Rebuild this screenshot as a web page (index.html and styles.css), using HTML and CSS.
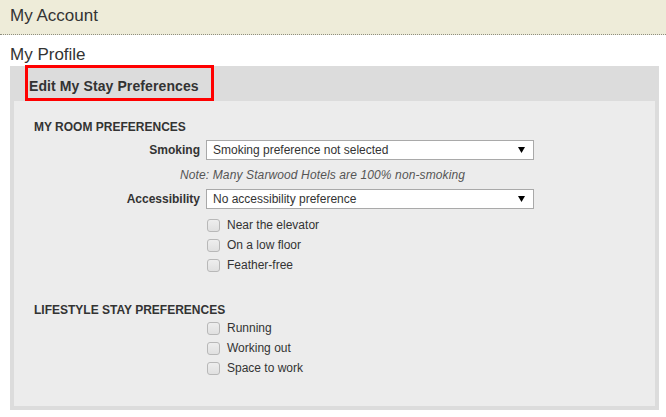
FILE: index.html
```html
<!DOCTYPE html>
<html lang="en">
<head>
<meta charset="utf-8">
<title>My Account</title>
<link rel="stylesheet" href="styles.css">
</head>
<body>
<header class="top-bar">
  <h1 class="top-title">My Account</h1>
</header>
<h2 class="page-title">My Profile</h2>
<section class="panel">
  <div class="panel-tab">
    <h3 class="tab-title">Edit My Stay Preferences</h3>
    <span class="highlight"></span>
  </div>
  <div class="panel-body">
    <h4 class="section-title">MY ROOM PREFERENCES</h4>
    <div class="field-row">
      <label class="field-label">Smoking</label>
      <div class="select">
        <span class="select-text">Smoking preference not selected</span>
        <svg class="select-arrow" width="7" height="6" viewBox="0 0 7 6"><polygon points="0,0 7,0 3.5,6" fill="#000"/></svg>
      </div>
    </div>
    <p class="note">Note: Many Starwood Hotels are 100% non-smoking</p>
    <div class="field-row field-row-second">
      <label class="field-label">Accessibility</label>
      <div class="select">
        <span class="select-text">No accessibility preference</span>
        <svg class="select-arrow" width="7" height="6" viewBox="0 0 7 6"><polygon points="0,0 7,0 3.5,6" fill="#000"/></svg>
      </div>
    </div>
    <ul class="check-list">
      <li class="check-item"><span class="checkbox"></span><span>Near the elevator</span></li>
      <li class="check-item"><span class="checkbox"></span><span>On a low floor</span></li>
      <li class="check-item"><span class="checkbox"></span><span>Feather-free</span></li>
    </ul>
    <h4 class="section-title section-title-lifestyle">LIFESTYLE STAY PREFERENCES</h4>
    <ul class="check-list check-list-lifestyle">
      <li class="check-item"><span class="checkbox"></span><span>Running</span></li>
      <li class="check-item"><span class="checkbox"></span><span>Working out</span></li>
      <li class="check-item"><span class="checkbox"></span><span>Space to work</span></li>
    </ul>
  </div>
</section>
</body>
</html>
```
FILE: styles.css
```css
* {
  box-sizing: border-box;
}

body {
  margin: 0;
  font-family: "Liberation Sans", Arial, sans-serif;
  color: #333;
  background: #fff;
}

.top-bar {
  height: 35px;
  background: #eeecd9;
  border-bottom: 1px dotted #8f8f80;
  padding: 6px 10px 0;
}

.top-title {
  margin: 0;
  font-size: 17px;
  font-weight: normal;
  line-height: 20px;
  color: #333;
}

.page-title {
  margin: 10px 10px 0;
  font-size: 17px;
  font-weight: normal;
  line-height: 20px;
  height: 21px;
  color: #333;
}

.panel {
  margin: 0 7px 0 10px;
  background: #dcdcdc;
  padding: 0 4px 4px;
}

.panel-tab {
  position: relative;
  height: 35px;
  padding: 12px 0 0 15px;
}

.tab-title {
  margin: 0;
  font-size: 14px;
  font-weight: bold;
  line-height: 16px;
  letter-spacing: 0.1px;
  color: #333;
}

.highlight {
  position: absolute;
  left: 11px;
  top: -1px;
  width: 189px;
  height: 36px;
  border: 3px solid #f00;
}

.panel-body {
  background: #ececec;
  height: 305px;
  padding: 19px 20px 0;
}

.section-title {
  margin: 0;
  font-size: 12px;
  font-weight: bold;
  line-height: 14px;
  color: #333;
}

.section-title-lifestyle {
  margin-top: 28px;
}

.field-row {
  display: flex;
  align-items: center;
  gap: 6px;
  margin-top: 6px;
}

.field-row-second {
  margin-top: 7px;
}

.field-label {
  width: 166px;
  text-align: right;
  font-size: 12px;
  font-weight: bold;
  color: #333;
}

.select {
  width: 328px;
  height: 20px;
  background: #fff;
  border: 1px solid #a9a9a9;
  display: flex;
  align-items: center;
  justify-content: space-between;
  padding: 0 8px 0 6px;
  font-size: 12px;
  color: #333;
}

.select-arrow {
  display: block;
}

.note {
  margin: 8px 0 0 146px;
  font-size: 12px;
  font-style: italic;
  line-height: 14px;
  letter-spacing: 0.12px;
  color: #555;
}

.check-list {
  list-style: none;
  margin: 6px 0 0;
  padding: 0 0 0 173px;
}

.check-list-lifestyle {
  margin-top: 1px;
}

.check-item {
  display: flex;
  align-items: center;
  gap: 7px;
  height: 20px;
  font-size: 12px;
  color: #333;
}

.checkbox {
  width: 13px;
  height: 13px;
  border: 1px solid #b8b8b8;
  border-radius: 3px;
  background: linear-gradient(#eeeeee, #e0e0e0);
  flex: none;
}
```
